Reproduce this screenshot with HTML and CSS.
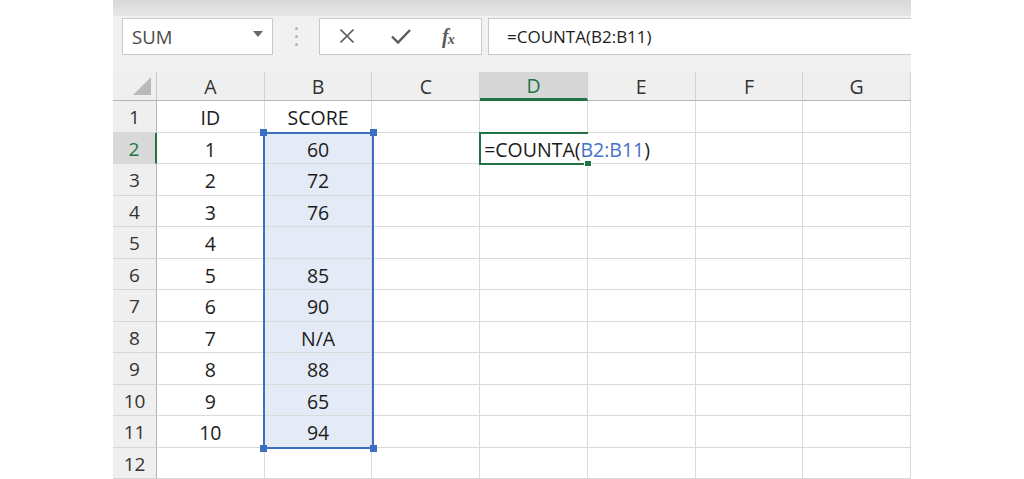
FILE: index.html
```html
<!DOCTYPE html>
<html>
<head>
<meta charset="utf-8">
<title>COUNTA</title>
<link rel="stylesheet" href="styles.css">
</head>
<body>
<div class="sheet">
  <div class="topstrip"></div>
  <div class="fbar">
    <div class="namebox"><span class="name">SUM</span><span class="caret"></span></div>
    <div class="grip"><i></i><i></i><i></i></div>
    <div class="btns">
      <svg class="ico" width="18" height="18" viewBox="0 0 18 18"><path d="M2.5 2.5 L15.5 15.5 M15.5 2.5 L2.5 15.5" stroke="#5a5a5a" stroke-width="1.7" fill="none"/></svg>
      <svg class="ico" width="22" height="18" viewBox="0 0 22 18"><path d="M2 9.5 L8 15.5 L20 3" stroke="#5a5a5a" stroke-width="2.4" fill="none"/></svg>
      <span class="fx">f<span class="fxs">x</span></span>
    </div>
    <div class="finput">=COUNTA(B2:B11)</div>
  </div>
  <div class="grid">
    <div class="hdr corner"><svg width="20" height="20" viewBox="0 0 20 20"><path d="M19 1 L19 19 L1 19 Z" fill="#b9b9b9"/></svg></div>
    <div class="hdr col">A</div>
    <div class="hdr col">B</div>
    <div class="hdr col">C</div>
    <div class="hdr col on">D</div>
    <div class="hdr col">E</div>
    <div class="hdr col">F</div>
    <div class="hdr col">G</div>

    <div class="hdr row">1</div><div class="c">ID</div><div class="c">SCORE</div><div class="c"></div><div class="c"></div><div class="c"></div><div class="c"></div><div class="c"></div>
    <div class="hdr row on">2</div><div class="c">1</div><div class="c sel">60</div><div class="c"></div><div class="c edit">=COUNTA(<span class="ref">B2:B11</span>)</div><div class="c"></div><div class="c"></div><div class="c"></div>
    <div class="hdr row">3</div><div class="c">2</div><div class="c sel">72</div><div class="c"></div><div class="c"></div><div class="c"></div><div class="c"></div><div class="c"></div>
    <div class="hdr row">4</div><div class="c">3</div><div class="c sel">76</div><div class="c"></div><div class="c"></div><div class="c"></div><div class="c"></div><div class="c"></div>
    <div class="hdr row">5</div><div class="c">4</div><div class="c sel"></div><div class="c"></div><div class="c"></div><div class="c"></div><div class="c"></div><div class="c"></div>
    <div class="hdr row">6</div><div class="c">5</div><div class="c sel">85</div><div class="c"></div><div class="c"></div><div class="c"></div><div class="c"></div><div class="c"></div>
    <div class="hdr row">7</div><div class="c">6</div><div class="c sel">90</div><div class="c"></div><div class="c"></div><div class="c"></div><div class="c"></div><div class="c"></div>
    <div class="hdr row">8</div><div class="c">7</div><div class="c sel">N/A</div><div class="c"></div><div class="c"></div><div class="c"></div><div class="c"></div><div class="c"></div>
    <div class="hdr row">9</div><div class="c">8</div><div class="c sel">88</div><div class="c"></div><div class="c"></div><div class="c"></div><div class="c"></div><div class="c"></div>
    <div class="hdr row">10</div><div class="c">9</div><div class="c sel">65</div><div class="c"></div><div class="c"></div><div class="c"></div><div class="c"></div><div class="c"></div>
    <div class="hdr row">11</div><div class="c">10</div><div class="c sel">94</div><div class="c"></div><div class="c"></div><div class="c"></div><div class="c"></div><div class="c"></div>
    <div class="hdr row">12</div><div class="c"></div><div class="c"></div><div class="c"></div><div class="c"></div><div class="c"></div><div class="c"></div><div class="c"></div>

    <div class="range"><i class="sq tl"></i><i class="sq tr"></i><i class="sq bl"></i><i class="sq br"></i></div>
    <div class="active"><i class="handle"></i></div>
  </div>
</div>
</body>
</html>
```
FILE: styles.css
```css
html, body {
  margin: 0;
  padding: 0;
  background: #ffffff;
}
body {
  width: 1024px;
  height: 479px;
  overflow: hidden;
  font-family: "Open Sans", "Liberation Sans", sans-serif;
}
.sheet {
  margin-left: 113px;
  width: 798px;
  height: 479px;
  background: #f1f1f1;
  display: flex;
  flex-direction: column;
}
.topstrip {
  height: 16px;
  flex: none;
  background: linear-gradient(#d8d8d8, #e6e6e6);
  border-bottom: 1px solid #e2e2e2;
  box-sizing: border-box;
}
.fbar {
  height: 40px;
  flex: none;
  display: flex;
  align-items: center;
  padding-left: 9px;
  box-sizing: border-box;
  margin-bottom: 16px;
}
.namebox {
  width: 151px;
  height: 37px;
  box-sizing: border-box;
  background: #fff;
  border: 1px solid #c9c9c9;
  display: flex;
  align-items: center;
  justify-content: space-between;
  padding: 0 9px 0 9px;
}
.name {
  font-size: 18.5px;
  color: #4a4a4a;
}
.caret {
  width: 0;
  height: 0;
  border-left: 5px solid transparent;
  border-right: 5px solid transparent;
  border-top: 6px solid #666;
  margin-top: -4px;
}
.grip {
  width: 46px;
  display: flex;
  flex-direction: column;
  align-items: center;
  gap: 5px;
}
.grip i {
  width: 3px;
  height: 3px;
  border-radius: 50%;
  background: #b0b0b0;
}
.btns {
  width: 163px;
  height: 37px;
  box-sizing: border-box;
  background: #fff;
  border: 1px solid #c9c9c9;
  display: flex;
  align-items: center;
  padding-left: 18px;
  gap: 34px;
}
.ico { display: block; }
.fx {
  font-family: "Liberation Serif", serif;
  font-style: italic;
  font-weight: bold;
  font-size: 20px;
  color: #5a5a5a;
  margin-left: -4px;
}
.fxs {
  font-size: 14px;
  position: relative;
  top: 1px;
  margin-left: -1px;
}
.finput {
  flex: 1;
  height: 37px;
  margin-left: 6px;
  box-sizing: border-box;
  background: #fff;
  border-top: 1px solid #c9c9c9;
  border-bottom: 1px solid #c9c9c9;
  border-left: 1px solid #c9c9c9;
  display: flex;
  align-items: center;
  padding-left: 18px;
  font-size: 17px;
  color: #1e1e1e;
}
.grid {
  position: relative;
  flex: none;
  display: grid;
  grid-template-columns: 44px repeat(7, minmax(0, 1fr));
  grid-template-rows: 29px repeat(12, 31.5px);
  background: #fff;
  font-size: 19.5px;
  color: #1c1c1c;
}
.hdr {
  background: #efefef;
  box-sizing: border-box;
  display: flex;
  align-items: center;
  justify-content: center;
  color: #333;
  min-width: 0;
}
.hdr.col {
  border-right: 1px solid #d2d2d2;
  border-bottom: 1px solid #b5b5b5;
  font-size: 19.5px;
  padding-top: 1px;
}
.hdr.col.on {
  background: #d7d7d7;
  color: #217346;
  border-bottom: 3px solid #217346;
}
.hdr.corner {
  border-right: 1px solid #c8c8c8;
  border-bottom: 1px solid #b5b5b5;
  justify-content: flex-end;
  align-items: flex-end;
  padding: 0 4px 4px 0;
}
.hdr.corner svg { display: block; }
.hdr.row {
  border-right: 1px solid #b5b5b5;
  border-bottom: 1px solid #d6d6d6;
  font-size: 19px;
  padding-top: 2px;
}
.hdr.row.on {
  background: #d9d9d9;
  color: #217346;
  border-right: 2px solid #217346;
}
.c {
  box-sizing: border-box;
  min-width: 0;
  border-right: 1px solid #dadada;
  border-bottom: 1px solid #dadada;
  display: flex;
  align-items: center;
  justify-content: center;
  white-space: nowrap;
  padding-top: 3px;
}
.c.sel {
  background: #e5ebf6;
}
.c.edit {
  justify-content: flex-start;
  padding-left: 4px;
  overflow: visible;
  border-right-color: transparent;
  position: relative;
  z-index: 1;
  color: #1a1a1a;
}
.ref { color: #4472c4; }
.range {
  position: absolute;
  left: 150px;
  top: 59.5px;
  width: 111px;
  height: 317px;
  box-sizing: border-box;
  border: 2px solid #3c6fc2;
  pointer-events: none;
}
.sq {
  position: absolute;
  width: 7px;
  height: 7px;
  background: #3c6fc2;
}
.sq.tl { left: -5px; top: -5px; }
.sq.tr { right: -5px; top: -5px; }
.sq.bl { left: -5px; bottom: -5px; }
.sq.br { right: -5px; bottom: -5px; }
.active {
  position: absolute;
  left: 366px;
  top: 59.5px;
  width: 109px;
  height: 33px;
  box-sizing: border-box;
  border: 2px solid #217346;
  border-right: none;
  z-index: 2;
}
.handle {
  position: absolute;
  right: -4px;
  bottom: -4px;
  width: 6px;
  height: 5px;
  background: #217346;
  border: 1px solid #fff;
}
```
